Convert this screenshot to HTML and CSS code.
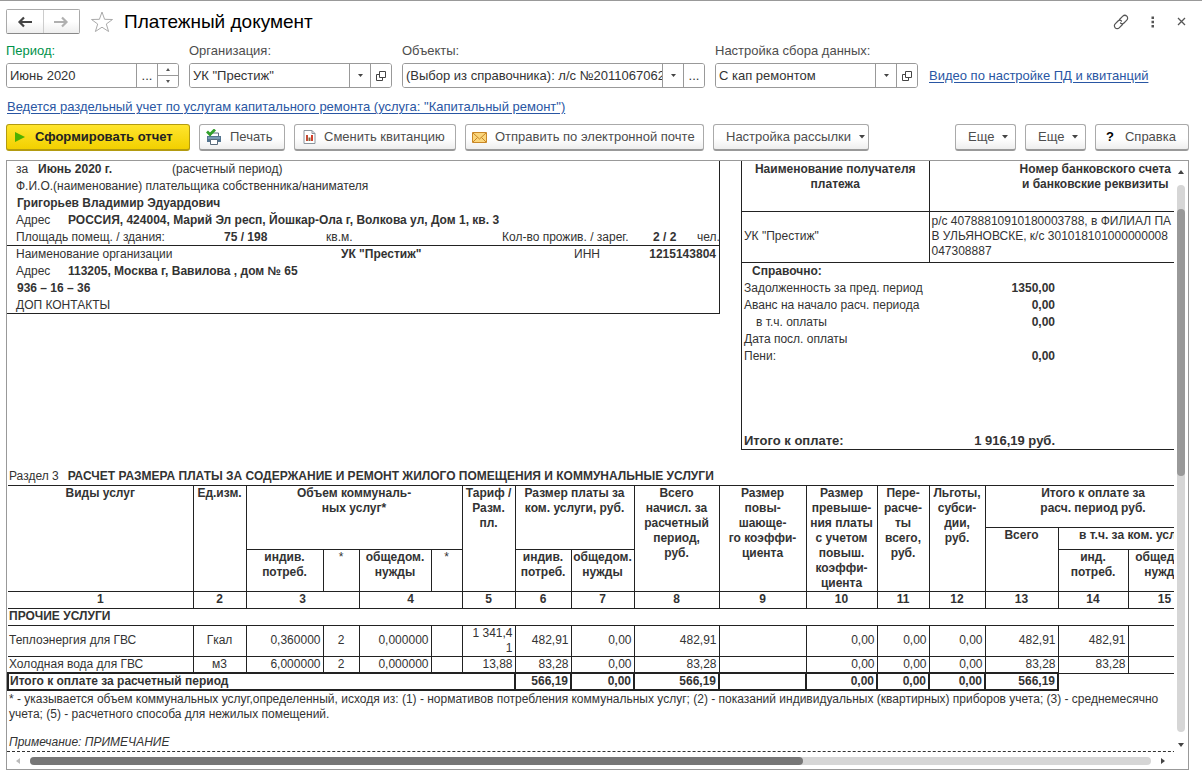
FILE: index.html
```
<!DOCTYPE html>
<html lang="ru">
<head>
<meta charset="utf-8">
<meta name="viewport" content="width=device-width, initial-scale=1">
<title>Платежный документ</title>
<link rel="stylesheet" href="styles.css">
</head>
<body>
<div class="window">
  <header class="titlebar">
    <div class="nav">
      <button class="nav-btn" type="button" aria-label="Назад"><svg width="16" height="12" viewBox="0 0 16 12"><path d="M7 1.500 2.500 6 7 10.500M3 6h12" fill="none" stroke="#444" stroke-width="2.200"/></svg></button>
      <button class="nav-btn" type="button" aria-label="Вперед"><svg width="16" height="12" viewBox="0 0 16 12"><path d="M9 1.500 13.500 6 9 10.500M13 6H1" fill="none" stroke="#b0b0b0" stroke-width="2.200"/></svg></button>
    </div>
    <button class="plain star" type="button" aria-label="В избранное"><svg width="24" height="22" viewBox="0 0 24 22"><path d="M12 1 14.600 8.300 22.500 8.500 16.300 13 18.600 20.500 12 16.200 5.400 20.500 7.700 13 1.500 8.500 9.400 8.300Z" fill="#fff" stroke="#aaa"/></svg></button>
    <h1>Платежный документ</h1>
    <div class="window-tools">
      <button class="plain" type="button" aria-label="Ссылка"><svg width="16" height="16" viewBox="0 0 16 16"><g fill="none" stroke="#555" stroke-width="1.200" stroke-linecap="round"><path d="M6.500 5.500 9.800 2.200a2.800 2.800 0 0 1 4 4L11 9a2.500 2.500 0 0 1-3.500 0"/><path d="M9.500 10.500 6.200 13.800a2.800 2.800 0 0 1-4-4L5 7a2.500 2.500 0 0 1 3.500 0"/></g></svg></button>
      <button class="plain" type="button" aria-label="Меню"><svg width="4" height="12" viewBox="0 0 4 12"><path d="M.5 .500h2.500v2.500h-2.500zM.5 4.700h2.500v2.500h-2.500zM.5 9h2.500v2.500h-2.500z" fill="#555"/></svg></button>
      <button class="plain" type="button" aria-label="Закрыть"><svg width="9" height="9" viewBox="0 0 9 9"><path d="M1 1l7 7M8 1 1 8" stroke="#555" stroke-width="1.300"/></svg></button>
    </div>
  </header>

  <div class="filters">
    <div class="field field-s">
      <label class="required" for="period">Период:</label>
      <div class="combo">
        <input id="period" type="text" value="Июнь 2020">
        <button type="button" aria-label="Выбрать период">...</button>
        <div class="spin">
          <button type="button" aria-label="Больше"><svg width="4" height="3" viewBox="0 0 4 3"><path d="M0 3 2 0l2 3z" fill="#555"/></svg></button>
          <button type="button" aria-label="Меньше"><svg width="4" height="3" viewBox="0 0 4 3"><path d="M0 0h4L2 3z" fill="#555"/></svg></button>
        </div>
      </div>
    </div>
    <div class="field field-m">
      <label for="org">Организация:</label>
      <div class="combo">
        <input id="org" type="text" value="УК &quot;Престиж&quot;">
        <button type="button" aria-label="Список"><svg width="5" height="3" viewBox="0 0 5 3"><path d="M0 0h5L2.500 3z" fill="#444"/></svg></button>
        <button type="button" aria-label="Открыть"><svg width="10" height="10" viewBox="0 0 10 10"><path d="M3.500.5h6v6h-6zM3.500 3.500h-3v6h6v-3" fill="none" stroke="#444"/></svg></button>
      </div>
    </div>
    <div class="field field-l">
      <label for="objects">Объекты:</label>
      <div class="combo">
        <input id="objects" type="text" value="(Выбор из справочника): л/с №2011067062">
        <button type="button" aria-label="Список"><svg width="5" height="3" viewBox="0 0 5 3"><path d="M0 0h5L2.500 3z" fill="#444"/></svg></button>
        <button type="button" aria-label="Выбрать">...</button>
      </div>
    </div>
    <div class="field field-m">
      <label for="setup">Настройка сбора данных:</label>
      <div class="combo">
        <input id="setup" type="text" value="С кап ремонтом">
        <button type="button" aria-label="Список"><svg width="5" height="3" viewBox="0 0 5 3"><path d="M0 0h5L2.500 3z" fill="#444"/></svg></button>
        <button type="button" aria-label="Открыть"><svg width="10" height="10" viewBox="0 0 10 10"><path d="M3.500.5h6v6h-6zM3.500 3.500h-3v6h6v-3" fill="none" stroke="#444"/></svg></button>
      </div>
    </div>
    <a class="video-link" href="#">Видео по настройке ПД и квитанций</a>
  </div>

  <p class="notice"><a href="#">Ведется раздельный учет по услугам капитального ремонта (услуга: "Капитальный ремонт")</a></p>

  <div class="toolbar">
    <button class="btn btn-main" type="button"><svg width="10" height="10" viewBox="0 0 10 10"><path d="M0 0 10 5 0 10z" fill="#4fb000"/></svg>Сформировать отчет</button>
    <button class="btn btn-print" type="button"><svg width="16" height="16" viewBox="0 0 16 16"><path d="M4.500 4h8v4h-8z" fill="#fff" stroke="#5a6c7c"/><path d="M1 7h14v6H1z" fill="#547590"/><path d="M2 8.500h12v1H2z" fill="#9fc0d6"/><path d="M4.500 10.500h7v5h-7z" fill="#fff" stroke="#5a6c7c"/><path d="M1 2.500 4 5.500 9 .500" fill="none" stroke="#32a02c" stroke-width="2.800"/></svg>Печать</button>
    <button class="btn btn-swap" type="button"><svg width="13" height="14" viewBox="0 0 13 14"><path d="M1 .500h8l3 3v10H1z" fill="#fff" stroke="#8c949c"/><path d="M9 .500v3h3" fill="none" stroke="#8c949c"/><path d="M3 5h2v6H3z" fill="#c44a35"/><path d="M5.500 7.500h2V11h-2z" fill="#7c6a40"/><path d="M8 5h2v6H8z" fill="#d0402c"/></svg>Сменить квитанцию</button>
    <button class="btn btn-mail" type="button"><svg width="15" height="11" viewBox="0 0 15 11"><path d="M.5.5h14v10H.5z" fill="#fbd67c" stroke="#c98727"/><path d="M1 1l6.500 6L14 1M1 10l4.500-4.500M14 10 9.500 5.500" fill="none" stroke="#c98727"/></svg>Отправить по электронной почте</button>
    <button class="btn btn-send" type="button">Настройка рассылки<svg width="6" height="4" viewBox="0 0 6 4"><path d="M0 0h6L3 3.500z" fill="#444"/></svg></button>
    <div class="spacer"></div>
    <button class="btn btn-more" type="button">Еще<svg width="6" height="4" viewBox="0 0 6 4"><path d="M0 0h6L3 3.500z" fill="#444"/></svg></button>
    <button class="btn btn-more" type="button">Еще<svg width="6" height="4" viewBox="0 0 6 4"><path d="M0 0h6L3 3.500z" fill="#444"/></svg></button>
    <button class="btn btn-help" type="button"><b>?</b>Справка</button>
  </div>

  <main class="report">
    <div class="view">
      <div class="sheet">
        <div class="top">
          <section class="payer">
            <div class="part">
              <div class="line"><span class="c-za">за</span><b class="c-month">Июнь 2020 г.</b><span>(расчетный период)</span></div>
              <div class="line">Ф.И.О.(наименование) плательщика собственника/нанимателя</div>
              <div class="line"><b>Григорьев Владимир Эдуардович</b></div>
              <div class="line"><span class="c-addr">Адрес</span><b>РОССИЯ, 424004, Марий Эл респ, Йошкар-Ола г, Волкова ул, Дом 1, кв. 3</b></div>
              <div class="line area"><span>Площадь помещ. / здания:</span><b>75 / 198</b><span>кв.м.</span><span>Кол-во прожив. / зарег.</span><b>2 / 2</b><span>чел.</span></div>
            </div>
            <div class="part">
              <div class="line org"><span>Наименование организации</span><b>УК "Престиж"</b><span>ИНН</span><b class="inn">1215143804</b></div>
              <div class="line"><span class="c-addr">Адрес</span><b>113205, Москва г, Вавилова , дом № 65</b></div>
              <div class="line"><b>936 – 16 – 36</b></div>
              <div class="line">ДОП КОНТАКТЫ</div>
            </div>
          </section>
          <section class="bank">
            <table class="bank-table">
              <tr class="bank-head"><th class="bank-name">Наименование получателя<br>платежа</th><th>Номер банковского счета<br>и банковские реквизиты</th></tr>
              <tr class="bank-row"><td>УК "Престиж"</td><td>р/с 40788810910180003788, в ФИЛИАЛ ПА<br>В УЛЬЯНОВСКЕ, к/с 301018101000000008<br>047308887</td></tr>
            </table>
            <div class="debts">
              <div class="debt"><b class="indent">Справочно:</b></div>
              <div class="debt"><span>Задолженность за пред. период</span><b>1350,00</b></div>
              <div class="debt"><span>Аванс на начало расч. периода</span><b>0,00</b></div>
              <div class="debt"><span class="indent-more">в т.ч. оплаты</span><b>0,00</b></div>
              <div class="debt"><span>Дата посл. оплаты</span></div>
              <div class="debt"><span>Пени:</span><b>0,00</b></div>
            </div>
            <div class="debt total"><b>Итого к оплате:</b><b>1 916,19 руб.</b></div>
          </section>
        </div>

        <div class="section-title">Раздел 3 <b>РАСЧЕТ РАЗМЕРА ПЛАТЫ ЗА СОДЕРЖАНИЕ И РЕМОНТ ЖИЛОГО ПОМЕЩЕНИЯ И КОММУНАЛЬНЫЕ УСЛУГИ</b></div>

        <table class="services">
          <colgroup>
            <col class="w185"><col class="w53"><col class="w77"><col class="w36"><col class="w72"><col class="w31"><col class="w53"><col class="w56"><col class="w63"><col class="w85"><col class="w87"><col class="w71"><col class="w52"><col class="w56"><col class="w73"><col class="w70"><col class="w73">
          </colgroup>
          <thead>
            <tr class="h42">
              <th rowspan="3">Виды услуг</th><th rowspan="3">Ед.изм.</th><th colspan="4" rowspan="2">Объем коммуналь-<br>ных услуг*</th><th rowspan="3">Тариф /<br>Разм.<br>пл.</th><th colspan="2" rowspan="2">Размер платы за<br>ком. услуги, руб.</th><th rowspan="3">Всего<br>начисл. за<br>расчетный<br>период,<br>руб.</th><th rowspan="3">Размер<br>повы-<br>шающе-<br>го коэффи-<br>циента</th><th rowspan="3">Размер<br>превыше-<br>ния платы<br>с учетом<br>повыш.<br>коэффи-<br>циента</th><th rowspan="3">Пере-<br>расче-<br>ты<br>всего,<br>руб.</th><th rowspan="3">Льготы,<br>субси-<br>дии,<br>руб.</th><th colspan="3">Итого к оплате за<br>расч. период руб.</th>
            </tr>
            <tr class="h21"><th rowspan="2">Всего</th><th colspan="2">в т.ч. за ком. усл.</th></tr>
            <tr class="h42"><th>индив.<br>потреб.</th><th class="light">*</th><th>общедом.<br>нужды</th><th class="light">*</th><th>индив.<br>потреб.</th><th>общедом.<br>нужды</th><th>инд.<br>потреб.</th><th>общедом.<br>нужды</th></tr>
            <tr class="h17"><th>1</th><th>2</th><th colspan="2">3</th><th colspan="2">4</th><th>5</th><th>6</th><th>7</th><th>8</th><th>9</th><th>10</th><th>11</th><th>12</th><th>13</th><th>14</th><th>15</th></tr>
          </thead>
          <tbody>
            <tr class="h17"><td class="group" colspan="17">ПРОЧИЕ УСЛУГИ</td></tr>
            <tr class="h31"><td class="left">Теплоэнергия для ГВС</td><td class="mid">Гкал</td><td>0,360000</td><td class="mid">2</td><td>0,000000</td><td></td><td>1 341,4<br>1</td><td>482,91</td><td>0,00</td><td>482,91</td><td></td><td>0,00</td><td>0,00</td><td>0,00</td><td>482,91</td><td>482,91</td><td></td></tr>
            <tr class="h17"><td class="left">Холодная вода для ГВС</td><td class="mid">м3</td><td>6,000000</td><td class="mid">2</td><td>0,000000</td><td></td><td>13,88</td><td>83,28</td><td>0,00</td><td>83,28</td><td></td><td>0,00</td><td>0,00</td><td>0,00</td><td>83,28</td><td>83,28</td><td></td></tr>
            <tr class="h17 sum"><td class="left" colspan="7">Итого к оплате за расчетный период</td><td>566,19</td><td>0,00</td><td>566,19</td><td></td><td>0,00</td><td>0,00</td><td>0,00</td><td>566,19</td><td class="none" colspan="2"></td></tr>
          </tbody>
        </table>

        <div class="footnote">* - указывается объем коммунальных услуг,определенный, исходя из: (1) - нормативов потребления коммунальных услуг; (2) - показаний индивидуальных (квартирных) приборов учета; (3) - среднемесячно<br>учета; (5) - расчетного способа для нежилых помещений.</div>
        <div class="remark">Примечание: ПРИМЕЧАНИЕ</div>
      </div>
    </div>
    <div class="vbar">
      <svg width="6" height="4" viewBox="0 0 6 4"><path d="M0 4 3 0l3 4z" fill="#444"/></svg>
      <div class="vtrack"><div class="vthumb"></div></div>
      <svg width="6" height="4" viewBox="0 0 6 4"><path d="M0 0h6L3 4z" fill="#444"/></svg>
    </div>
    <div class="hbar">
      <svg width="4" height="6" viewBox="0 0 4 6"><path d="M4 0v6L0 3z" fill="#bbb"/></svg>
      <div class="htrack"><div class="hthumb"></div></div>
      <svg width="4" height="6" viewBox="0 0 4 6"><path d="M0 0v6l4-3z" fill="#444"/></svg>
    </div>
  </main>
</div>
</body>
</html>
```
FILE: styles.css
```
* { box-sizing: border-box; }
body { margin: 0; background: #fff; color: #333; font: 13px/16px "Liberation Sans", Arial, sans-serif; }
button, input { font: inherit; color: inherit; margin: 0; padding: 0; }
button { cursor: pointer; }
svg { display: block; flex: none; }
a { color: #2956a3; text-decoration: underline; text-underline-offset: 2px; }

.window { display: flex; flex-direction: column; min-height: 100vh; padding: 8px 13px 7px 6px; border-top: 1px solid #999; }

.titlebar { display: flex; align-items: center; height: 25px; }
.nav { display: flex; width: 74px; height: 25px; border: 1px solid #aaa; border-bottom-color: #888; border-radius: 2px; }
.nav-btn { flex: 1; display: flex; align-items: center; justify-content: center; border: 0; background: linear-gradient(#fff 50%, #eee); }
.nav-btn + .nav-btn { border-left: 1px solid #ccc; }
.plain { display: flex; border: 0; background: none; }
.star { margin: 0 10px; }
h1 { margin: 0; color: #000; font-size: 19px; line-height: 24px; font-weight: 400; }
.window-tools { display: flex; align-items: center; gap: 22px; margin-left: auto; padding-right: 3px; }

.filters { display: flex; align-items: flex-end; gap: 10px; margin-top: 9px; }
.field { display: flex; flex-direction: column; gap: 4px; }
.field label { color: #4d4d4d; }
.field .required { color: #00924a; }
.field-s { width: 173px; }
.field-m { width: 203px; }
.field-l { width: 303px; }
.combo { display: flex; height: 25px; border: 1px solid #999; border-radius: 3px; overflow: hidden; }
.combo input { flex: 1; min-width: 0; padding: 0 0 0 3px; border: 0; outline: 0; background: #fff; }
.combo button { display: flex; align-items: center; justify-content: center; width: 21px; border: 0; border-left: 1px solid #999; background: #fff; }
.spin { display: flex; flex-direction: column; }
.spin button { flex: 1; }
.spin button + button { border-top: 1px solid #999; }
.video-link { margin-left: 1px; padding-bottom: 4px; }
.notice { margin: 11px 0 0; padding-left: 1px; }

.toolbar { display: flex; gap: 9px; margin-top: 9px; }
.btn { display: flex; align-items: center; gap: 8px; height: 27px; padding: 0 8px; white-space: nowrap; color: #4d4d4d; background: linear-gradient(#fff 55%, #eee); border: 1px solid #aaa; border-bottom: 2px solid #999; border-radius: 3px; }
.btn-main { width: 184px; gap: 10px; color: #222; font-weight: 700; background: linear-gradient(#ffe52e, #f2d000); border-color: #b39b10; }
.btn-print { width: 86px; padding-left: 6px; }
.btn-swap { width: 162px; }
.btn-mail { width: 239px; padding-left: 6px; }
.btn-send { width: 156px; }
.btn-more { width: 61px; }
.btn-help { width: 94px; gap: 11px; padding-left: 10px; }
.btn-help b { color: #000; }
.btn-send, .btn-more { padding-left: 12px; }
.spacer { flex: 1; }

.report { flex: 1; display: grid; grid-template-columns: minmax(0, 1fr) 14px; grid-template-rows: 1fr 16px; margin-top: 9px; border: 1px solid #999; font-size: 12px; line-height: 15px; }
.view { overflow: hidden; }
.sheet { width: 1254px; white-space: nowrap; border-bottom: 1px dashed #333; }
.top { display: flex; align-items: flex-start; gap: 21px; }
.payer { width: 713px; border-right: 1px solid #222; }
.part { border-bottom: 1px solid #222; }
.line { display: flex; height: 17px; align-items: center; padding-left: 9px; }
.line:last-child { height: 16px; }
.line > b:first-child { padding-left: 1px; }
.c-za { width: 22px; }
.c-month { width: 134px; }
.c-addr { width: 52px; }
.area { display: grid; grid-template-columns: 208px 102px 176px 151px 44px auto; }
.org { display: grid; grid-template-columns: 325px 233px 61px 1fr; }
.inn { padding-right: 3px; text-align: right; }

.bank { flex: 1; border-left: 1px solid #222; border-bottom: 1px solid #222; }
.bank-table { width: 100%; table-layout: fixed; border-collapse: collapse; }
.bank-table th, .bank-table td { padding: 0 2px; border-bottom: 1px solid #222; }
.bank-table th { padding-top: 1px; vertical-align: top; }
.bank-table th + th, .bank-table td + td { border-left: 1px solid #222; }
.bank-name { width: 187px; }
.bank-head { height: 50px; }
.bank-row { height: 51px; }
.debts { height: 169px; }
.debt { display: flex; justify-content: space-between; align-items: center; width: 313px; height: 17px; padding-left: 2px; }
.indent { padding-left: 8px; }
.indent-more { padding-left: 12px; }
.total { font-size: 13px; }

.section-title { display: flex; gap: 9px; margin-top: 18px; height: 17px; align-items: center; padding-left: 2px; }

.services { width: 1193px; table-layout: fixed; border-collapse: collapse; }
.services th, .services td { padding: 0 2px; border: 1px solid #222; }
.services th { vertical-align: top; padding: 0; }
.services td { text-align: right; }
.services th:first-child { border-left: 0; }
.services td:first-child { border-left: 0; padding-left: 1px; }
.services .light { font-weight: 400; }
.services .left, .services .group { text-align: left; }
.services .mid { text-align: center; }
.services .group { font-weight: 700; }
.services .sum td { border: 2px solid #222; font-weight: 700; }
.services .sum .none { border: 0; border-top: 1px solid #222; }
.h42 { height: 42px; }
.h21 { height: 21px; }
.h17 { height: 17px; }
.h31 { height: 31px; }
.w185 { width: 185px; } .w53 { width: 53px; } .w77 { width: 77px; } .w36 { width: 36px; }
.w72 { width: 72px; } .w31 { width: 31px; } .w56 { width: 56px; } .w63 { width: 63px; }
.w85 { width: 85px; } .w87 { width: 87px; } .w71 { width: 71px; } .w52 { width: 52px; }
.w73 { width: 73px; } .w70 { width: 70px; }

.footnote { padding: 1px 2px 0; }
.remark { padding: 13px 2px 1px; font-style: italic; }

.vbar { display: flex; flex-direction: column; align-items: center; gap: 11px; padding: 9px 0 6px; }
.vtrack { flex: 1; width: 8px; border-radius: 4px; background: #d6d6d6; padding-top: 24px; }
.vthumb { height: 51%; border-radius: 4px; background: #999; }
.hbar { grid-column: 1 / 3; display: flex; align-items: center; gap: 10px; padding: 0 23px 0 9px; }
.htrack { flex: 1; height: 8px; border-radius: 4px; background: #d6d6d6; }
.hthumb { width: 69%; height: 8px; border-radius: 4px; background: #777; }
```
